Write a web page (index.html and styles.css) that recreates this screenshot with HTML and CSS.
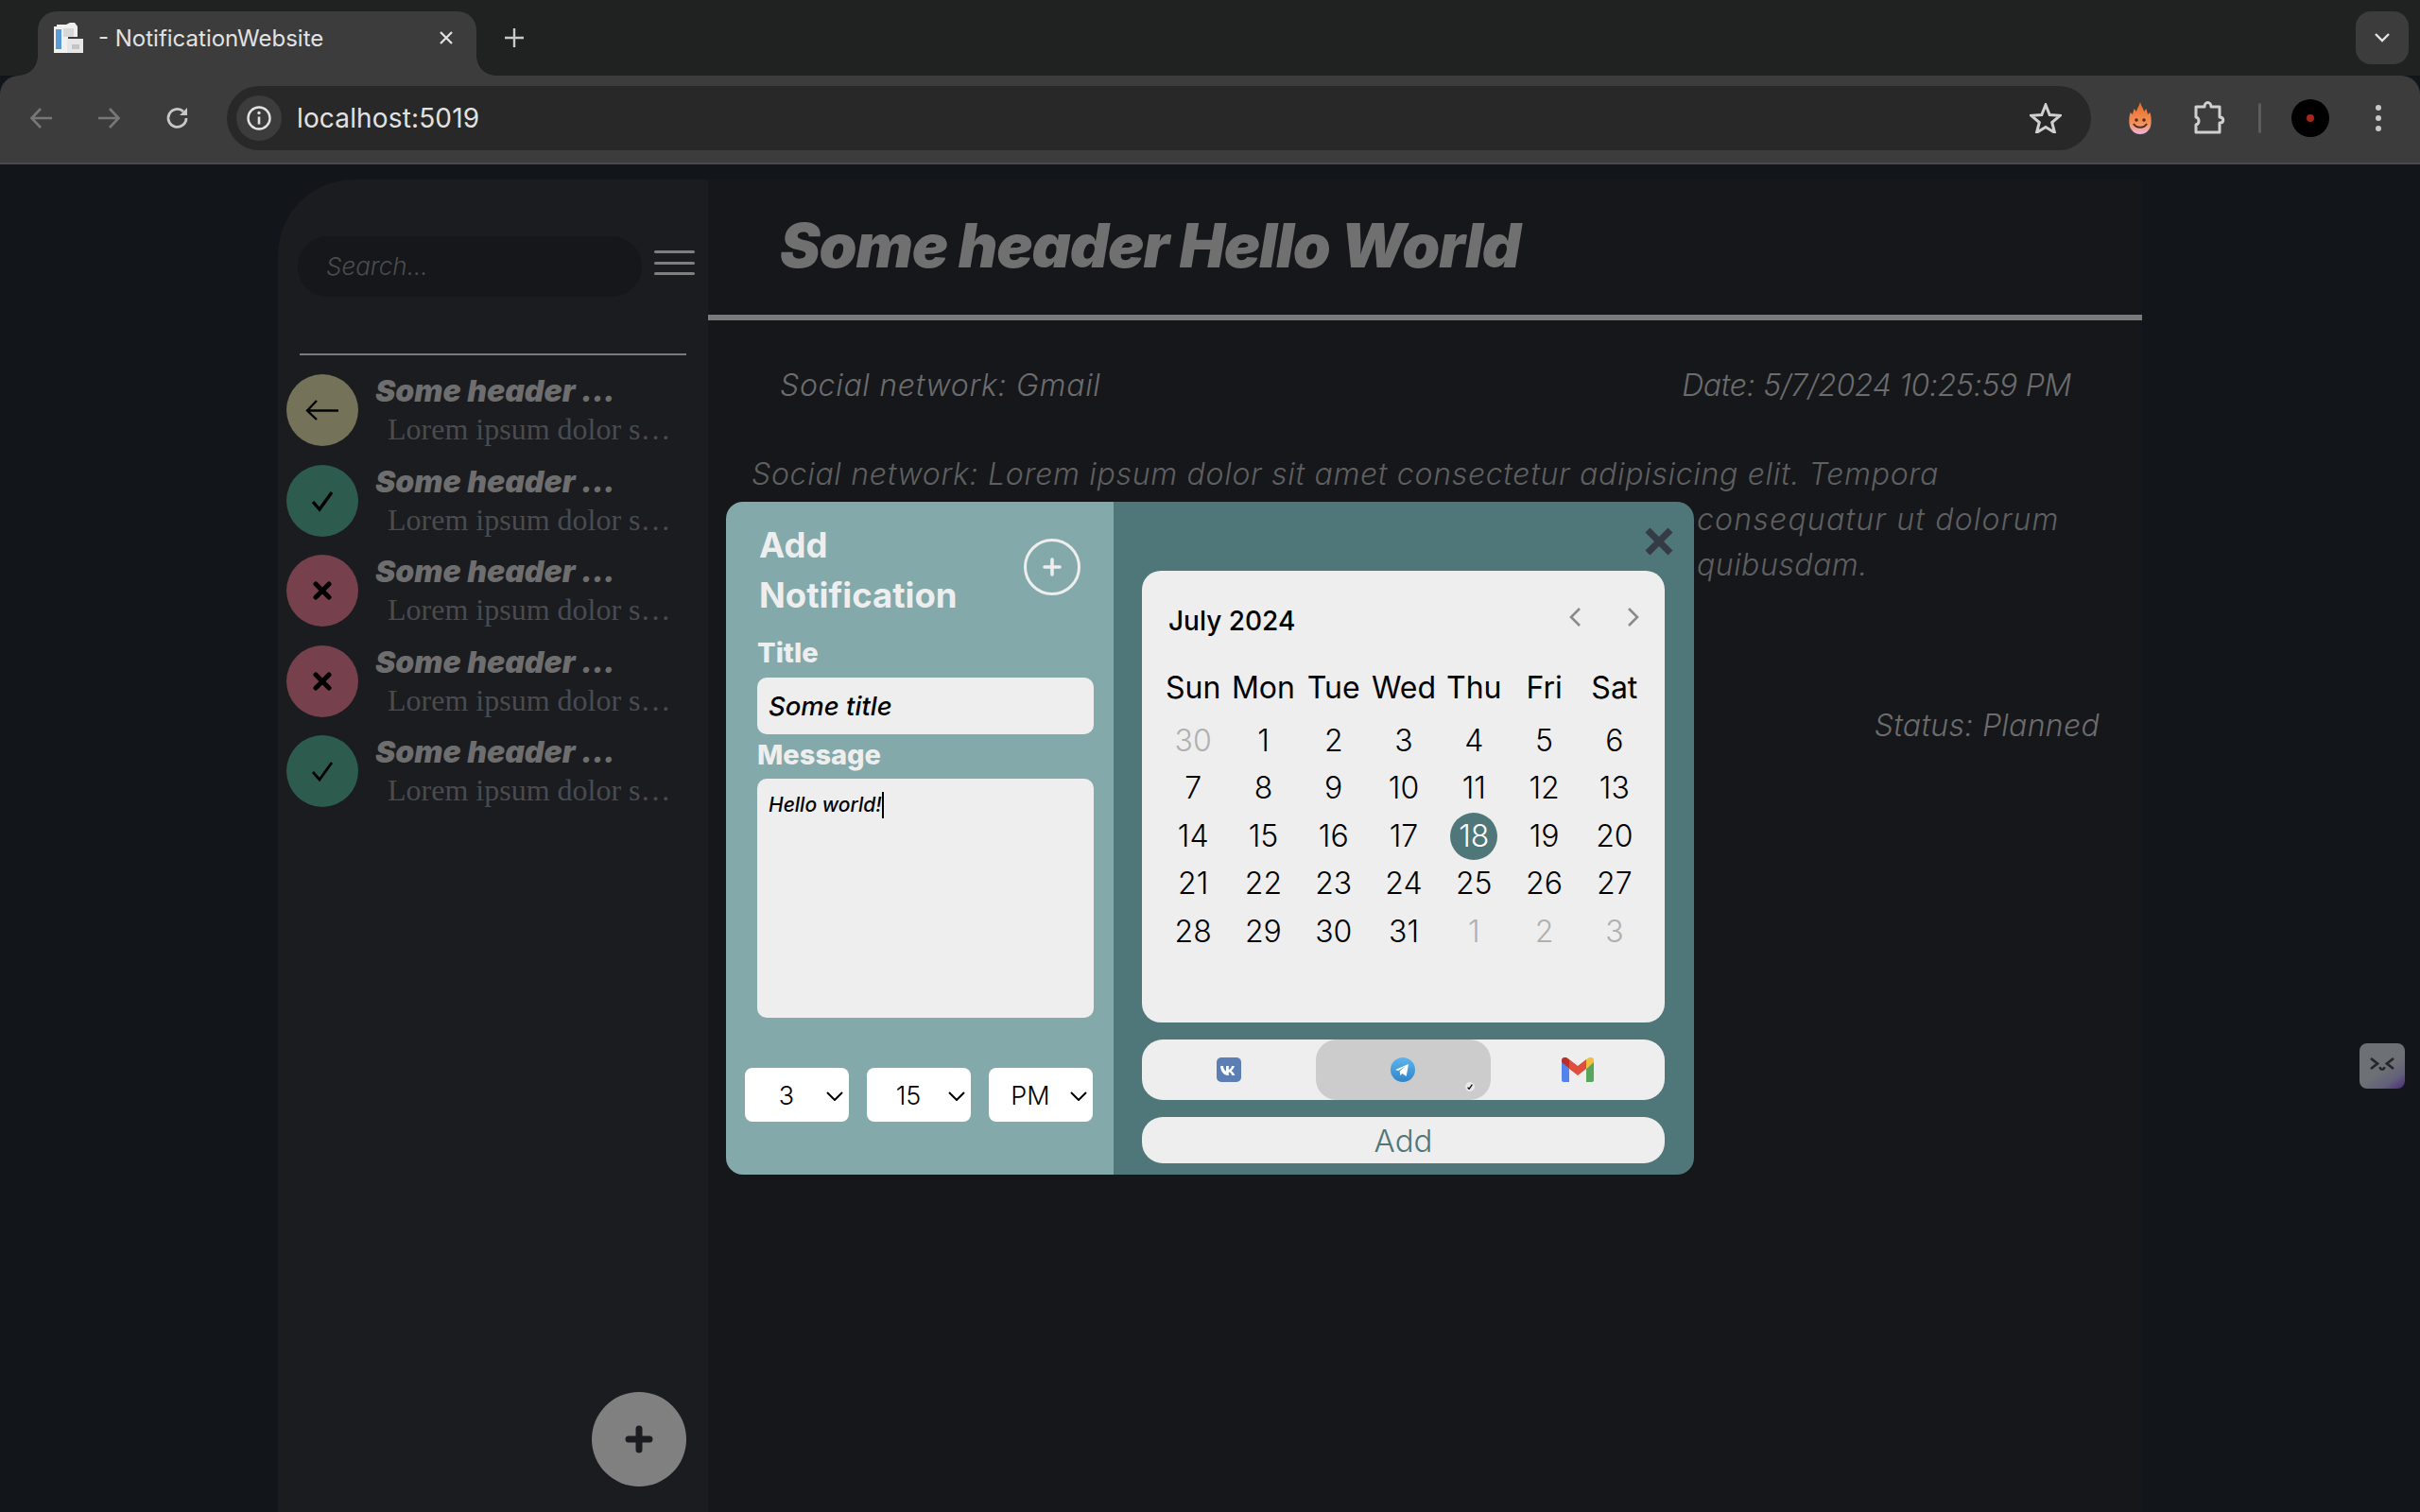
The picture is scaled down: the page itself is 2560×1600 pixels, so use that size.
FILE: index.html
```html
<!DOCTYPE html>
<html lang="en">
<head>
<meta charset="UTF-8" />
<title>- NotificationWebsite</title>
<link rel="stylesheet" href="styles.css">
</head>
<body>
  <!-- Browser chrome -->
  <header class="tabstrip">
    <div class="tab">
      <svg class="favicon" viewBox="0 0 32 32"><path d="M1 4h3V2h10l4-2h5l3 4v11H16v17H1z" fill="#f0f0f0"/><path d="M3 7h6v21H3z" fill="#5b9bd5"/><path d="M11 6h11v9H11z" fill="#d8d8d8"/><path d="M15 17h17v15H15z" fill="#e6e6e6"/><path d="M20 23h8v5h-8z" fill="#c4c4c4"/></svg>
      <span class="tab-title">- NotificationWebsite</span>
      <svg class="tab-close" viewBox="0 0 16 16"><path d="M2 2l12 12M14 2L2 14" stroke="#e3e3e3" stroke-width="2.2"/></svg>
    </div>
    <svg class="new-tab" viewBox="0 0 20 20"><path d="M10 0v20M0 10h20" stroke="#c8c8c8" stroke-width="2.4"/></svg>
    <div class="tab-search"><svg viewBox="0 0 16 10" width="16" height="10"><path d="M1 1l7 7 7-7" fill="none" stroke="#e3e3e3" stroke-width="2.4"/></svg></div>
  </header>
  <nav class="toolbar">
    <svg class="nav-icon" viewBox="0 0 26 26"><path d="M24 13H3M12 3L2.500 13 12 23" fill="none" stroke="#777" stroke-width="2.6"/></svg>
    <svg class="nav-icon" viewBox="0 0 26 26"><path d="M2 13h21M14 3l9.500 10L14 23" fill="none" stroke="#777" stroke-width="2.6"/></svg>
    <svg class="nav-icon reload" viewBox="0 0 26 26"><path d="M22 13a9.500 9.500 0 1 1-3-7" fill="none" stroke="#c8c8c8" stroke-width="2.8"/><path d="M23 2v8h-8z" fill="#c8c8c8"/></svg>
    <div class="omnibox">
      <div class="site-info"><svg viewBox="0 0 26 26" width="26" height="26"><circle cx="13" cy="13" r="11.500" fill="none" stroke="#e3e3e3" stroke-width="2.4"/><path d="M13 11.500v8" stroke="#e3e3e3" stroke-width="2.6"/><circle cx="13" cy="7.500" r="1.700" fill="#e3e3e3"/></svg></div>
      <span class="url">localhost:5019</span>
      <svg class="star" viewBox="0 0 34 32"><path d="M17 2l4.200 10.500 11 .8-8.500 7.200 2.800 10.800L17 25.400 7.500 31.300l2.800-10.800L1.800 13.300l11-.8z" fill="none" stroke="#d0d0d0" stroke-width="3"/></svg>
    </div>
    <svg class="flame" viewBox="0 0 26 34"><defs><linearGradient id="fl" x1="0" y1="0" x2="0" y2="1"><stop offset="0" stop-color="#ee6a1e"/><stop offset=".65" stop-color="#f0905a"/><stop offset="1" stop-color="#efb6e0"/></linearGradient></defs><path d="M13 0c1 4 3 6 4 10l2.500-3c.5 2 1 4 1.500 6l2.500-2c1.500 5 1.500 11 .5 15-2 5-6 8-11 8S4 31 2 26C1 22 1 16 2.500 11L5 13c.5-2 1-4 1.500-6L9 10c1-4 3-6 4-10z" fill="url(#fl)"/><circle cx="9" cy="19" r="1.800" fill="#5a2a1a"/><circle cx="17" cy="19" r="1.800" fill="#5a2a1a"/><path d="M6 23c3 5 11 5 14 0" fill="none" stroke="#5a2a1a" stroke-width="2"/></svg>
    <svg class="puzzle" viewBox="0 0 34 36"><path d="M3 6h9c0-6 7-6 7 0h9v11c5 0 5 6 0 6v10H3V25c4-1 4-7 0-8z" fill="none" stroke="#d0d0d0" stroke-width="3" stroke-linejoin="round"/></svg>
    <span class="tool-sep"></span>
    <div class="avatar"><span class="avatar-dot"></span></div>
    <div class="kebab"><span></span><span></span><span></span></div>
  </nav>

  <!-- Page -->
  <div class="page">
    <aside class="sidebar">
      <div class="search-row">
        <div class="search">Search...</div>
        <div class="burger"><span></span><span></span><span></span></div>
      </div>
      <div class="divider"></div>
      <ul class="note-list">
        <li class="note">
          <div class="status tan"><svg viewBox="0 0 36 24" width="36" height="24"><path d="M35 12.500H3M12 2L2 12.500 12 22" fill="none" stroke="#000" stroke-width="2.400"/></svg></div>
          <div class="note-text"><div class="note-head">Some header ...</div><div class="note-sub">Lorem ipsum dolor s…</div></div>
        </li>
        <li class="note">
          <div class="status green"><svg viewBox="0 0 24 24" width="24" height="24"><path d="M2 13l7 8L22 3" fill="none" stroke="#000" stroke-width="3.400"/></svg></div>
          <div class="note-text"><div class="note-head">Some header ...</div><div class="note-sub">Lorem ipsum dolor s…</div></div>
        </li>
        <li class="note">
          <div class="status red"><svg viewBox="0 0 20 20" width="20" height="20"><path d="M3 3l14 14M17 3L3 17" stroke="#000" stroke-width="5" stroke-linecap="round"/></svg></div>
          <div class="note-text"><div class="note-head">Some header ...</div><div class="note-sub">Lorem ipsum dolor s…</div></div>
        </li>
        <li class="note">
          <div class="status red"><svg viewBox="0 0 20 20" width="20" height="20"><path d="M3 3l14 14M17 3L3 17" stroke="#000" stroke-width="5" stroke-linecap="round"/></svg></div>
          <div class="note-text"><div class="note-head">Some header ...</div><div class="note-sub">Lorem ipsum dolor s…</div></div>
        </li>
        <li class="note">
          <div class="status green"><svg viewBox="0 0 24 24" width="24" height="24"><path d="M2 13l7 8L22 3" fill="none" stroke="#000" stroke-width="2.800"/></svg></div>
          <div class="note-text"><div class="note-head">Some header ...</div><div class="note-sub">Lorem ipsum dolor s…</div></div>
        </li>
      </ul>
      <div class="fab"><svg viewBox="0 0 30 30" width="30" height="30"><path d="M15 4v22M4 15h22" stroke="#1a1c20" stroke-width="7" stroke-linecap="round"/></svg></div>
    </aside>

    <main class="detail">
      <h1 class="detail-title">Some header Hello World</h1>
      <div class="detail-meta">
        <span class="meta-network">Social network: Gmail</span>
        <span class="meta-date">Date: 5/7/2024 10:25:59 PM</span>
      </div>
      <div class="detail-body">
        <div class="body-line">Social network: Lorem ipsum dolor sit amet consectetur adipisicing elit. Tempora</div>
        <div class="body-line behind wide">consequatur ut dolorum</div>
        <div class="body-line behind">quibusdam.</div>
      </div>
      <div class="detail-status">Status: Planned</div>
    </main>

    <!-- Add notification dialog -->
    <section class="dialog">
      <div class="dialog-left">
        <div class="dialog-head">
          <h2 class="dialog-title">Add<br>Notification</h2>
          <div class="add-circle"><svg viewBox="0 0 20 20" width="20" height="20"><path d="M10 2v16M2 10h16" stroke="#eee" stroke-width="3.600" stroke-linecap="round"/></svg></div>
        </div>
        <div class="field-label">Title</div>
        <div class="field-input">Some title</div>
        <div class="field-label msg">Message</div>
        <div class="field-area">Hello world!<span class="caret"></span></div>
        <div class="time-row">
          <div class="time-select"><span>3</span><svg viewBox="0 0 18 10" width="18" height="10"><path d="M1 1l8 8 8-8" fill="none" stroke="#000" stroke-width="2"/></svg></div>
          <div class="time-select"><span>15</span><svg viewBox="0 0 18 10" width="18" height="10"><path d="M1 1l8 8 8-8" fill="none" stroke="#000" stroke-width="2"/></svg></div>
          <div class="time-select"><span>PM</span><svg viewBox="0 0 18 10" width="18" height="10"><path d="M1 1l8 8 8-8" fill="none" stroke="#000" stroke-width="2"/></svg></div>
        </div>
      </div>
      <div class="dialog-right">
        <div class="close-row"><svg viewBox="0 0 30 30" width="30" height="30"><path d="M3 3l24 24M27 3L3 27" stroke="#353b45" stroke-width="7"/></svg></div>
        <div class="calendar">
          <div class="cal-head">
            <span class="cal-month">July 2024</span>
            <svg class="cal-nav" viewBox="0 0 14 22" width="14" height="22"><path d="M12 2L3 11l9 9" fill="none" stroke="#8a8a8a" stroke-width="2.600"/></svg>
            <svg class="cal-nav" viewBox="0 0 14 22" width="14" height="22"><path d="M2 2l9 9-9 9" fill="none" stroke="#8a8a8a" stroke-width="2.600"/></svg>
          </div>
          <div class="cal-grid">
            <span class="wd">Sun</span><span class="wd">Mon</span><span class="wd">Tue</span><span class="wd">Wed</span><span class="wd">Thu</span><span class="wd">Fri</span><span class="wd">Sat</span>
            <span class="day off">30</span><span class="day">1</span><span class="day">2</span><span class="day">3</span><span class="day">4</span><span class="day">5</span><span class="day">6</span>
            <span class="day">7</span><span class="day">8</span><span class="day">9</span><span class="day">10</span><span class="day">11</span><span class="day">12</span><span class="day">13</span>
            <span class="day">14</span><span class="day">15</span><span class="day">16</span><span class="day">17</span><span class="day picked"><b>18</b></span><span class="day">19</span><span class="day">20</span>
            <span class="day">21</span><span class="day">22</span><span class="day">23</span><span class="day">24</span><span class="day">25</span><span class="day">26</span><span class="day">27</span>
            <span class="day">28</span><span class="day">29</span><span class="day">30</span><span class="day">31</span><span class="day off">1</span><span class="day off">2</span><span class="day off">3</span>
          </div>
        </div>
        <div class="network-tabs">
          <div class="net">
            <svg viewBox="0 0 26 26" width="26" height="26"><rect width="26" height="26" rx="5" fill="#5b7fb5"/><path d="M4 9h3c.3 3 1.600 5 3 5.500V9h2.800v4c1.300-.3 2.700-2 3.300-4h2.800c-.6 2.600-2.200 4.300-3.400 5.200 1.300.7 3 2.200 3.800 4.800h-3c-.6-2-2-3.300-3.500-3.500V19h-.6C7.800 19 4.400 15.300 4 9z" fill="#fff"/></svg>
          </div>
          <div class="net selected">
            <svg viewBox="0 0 26 26" width="26" height="26"><defs><linearGradient id="tg" x1="0" y1="0" x2="0" y2="1"><stop offset="0" stop-color="#5fb4ee"/><stop offset="1" stop-color="#2f85c8"/></linearGradient></defs><circle cx="13" cy="13" r="13" fill="url(#tg)"/><path d="M5 13l14-6-2.300 13-4.200-3-2.200 2-.6-4.500 6.300-5.500-7.800 5z" fill="#fff"/></svg>
            <span class="net-check"><svg viewBox="0 0 10 10" width="6" height="6"><path d="M1 6l2.500 3L9 1" fill="none" stroke="#000" stroke-width="2"/></svg></span>
          </div>
          <div class="net">
            <svg viewBox="0 0 34 26" width="34" height="26"><path d="M0 4v20c0 1 1 2 2 2h6V12z" fill="#5383ec"/><path d="M26 12v14h6c1 0 2-1 2-2V4z" fill="#58a65c"/><path d="M26 2v10l8-7V3c0-2-2-4-5-3z" fill="#f1bf42"/><path d="M8 12V2l9 7 9-7v10l-9 7z" fill="#e04e3e"/><path d="M0 3v2l8 7V2L5 0C3-.6 0 0 0 3z" fill="#b9302a"/></svg>
          </div>
        </div>
        <div class="add-btn">Add</div>
      </div>
    </section>

    <div class="devtools-bubble"><svg viewBox="0 0 30 20" width="30" height="20"><path d="M3 4l7 5.500-7 5.500M27 4l-7 5.500 7 5.500" fill="none" stroke="#24272c" stroke-width="2.800"/><path d="M12.500 13c.5 3.500 4.500 3.500 5 0" fill="none" stroke="#24272c" stroke-width="2.400"/></svg></div>
  </div>
</body>
</html>
```

FILE: styles.css
```css
/* Reset and base styles */
* {
  box-sizing: border-box;
}
html, body {
  margin: 0;
  padding: 0;
  width: 2560px;
  height: 1600px;
  overflow: hidden;
  background: #12151a;
  font-family: Inter, 'Liberation Sans', sans-serif;
}
h1, h2, ul {
  margin: 0;
  padding: 0;
}

/* Browser chrome */
.tabstrip {
  display: flex;
  align-items: flex-start;
  height: 80px;
  padding: 12px 12px 0 40px;
  background: #202222;
}
.tab {
  position: relative;
  display: flex;
  align-items: center;
  width: 464px;
  height: 68px;
  padding: 0 24px 12px 16px;
  background: #3c3c3c;
  border-radius: 20px 20px 0 0;
}
.tab::before, .tab::after {
  content: '';
  position: absolute;
  bottom: 0;
  width: 20px;
  height: 20px;
}
.tab::before {
  left: -20px;
  background: radial-gradient(circle at 0 0, #202222 19.500px, #3c3c3c 20px);
}
.tab::after {
  right: -20px;
  background: radial-gradient(circle at 100% 0, #202222 19.500px, #3c3c3c 20px);
}
.favicon {
  width: 32px;
  height: 32px;
}
.tab-title {
  flex: 1;
  margin-left: 16px;
  font-size: 24px;
  color: #e2e2e2;
}
.tab-close {
  width: 16px;
  height: 16px;
}
.new-tab {
  width: 20px;
  height: 20px;
  margin: 18px 0 0 30px;
}
.tab-search {
  display: flex;
  align-items: center;
  justify-content: center;
  width: 56px;
  height: 56px;
  margin-left: auto;
  background: #3c3c3c;
  border-radius: 16px;
}
.toolbar {
  display: flex;
  align-items: center;
  height: 94px;
  padding: 0 0 2px 31px;
  background: #3c3c3c;
  border-bottom: 2px solid #4a4a4a;
  border-radius: 20px 20px 0 0;
}
.nav-icon {
  width: 26px;
  height: 26px;
  margin-right: 45px;
}
.reload {
  margin-left: 2px;
}
.omnibox {
  display: flex;
  align-items: center;
  width: 1972px;
  height: 68px;
  margin-left: -6px;
  padding: 0 31px 0 10px;
  background: #282828;
  border-radius: 34px;
}
.site-info {
  display: flex;
  align-items: center;
  justify-content: center;
  width: 48px;
  height: 48px;
  background: #3c3c3c;
  border-radius: 50%;
}
.url {
  flex: 1;
  margin-left: 16px;
  font-size: 28px;
  color: #e2e2e2;
  letter-spacing: 0.15px;
}
.star {
  width: 34px;
  height: 32px;
}
.flame {
  width: 26px;
  height: 34px;
  margin-left: 39px;
}
.puzzle {
  width: 34px;
  height: 36px;
  margin-left: 43px;
}
.tool-sep {
  width: 3px;
  height: 32px;
  margin-left: 35px;
  background: #5c5c5c;
  border-radius: 2px;
}
.avatar {
  display: flex;
  align-items: center;
  justify-content: center;
  width: 40px;
  height: 40px;
  margin-left: 32px;
  background: #000;
  border-radius: 50%;
}
.avatar-dot {
  width: 8px;
  height: 8px;
  background: #a8251a;
  border-radius: 50%;
}
.kebab {
  display: flex;
  flex-direction: column;
  gap: 5px;
  margin-left: 49px;
}
.kebab span {
  width: 6px;
  height: 6px;
  background: #c8c8c8;
  border-radius: 50%;
}

/* Page */
.page {
  position: relative;
  display: flex;
  height: 1426px;
  padding: 16px 0 0 294px;
}

/* Sidebar */
.sidebar {
  display: flex;
  flex-direction: column;
  width: 455px;
  padding-top: 60px;
  background: #1a1c20;
  border-radius: 80px 0 0 0;
}
.search-row {
  display: flex;
  align-items: flex-start;
  padding-left: 21px;
}
.search {
  width: 364px;
  height: 64px;
  padding-left: 30px;
  font-size: 26px;
  font-weight: 300;
  font-style: italic;
  line-height: 64px;
  color: #4b4c4f;
  background: #16171b;
  border-radius: 32px;
}
.burger {
  display: flex;
  flex-direction: column;
  gap: 8.500px;
  width: 43px;
  margin: 15px 0 0 13px;
}
.burger span {
  height: 3px;
  background: #7f7f7f;
  border-radius: 2px;
}
.divider {
  width: 409px;
  height: 2px;
  margin: 60px 0 20px 23px;
  background: #7b7b7b;
}
.note-list {
  display: flex;
  flex-direction: column;
  gap: 19.600px;
  padding-left: 9px;
  list-style: none;
}
.note {
  display: flex;
  gap: 18px;
  height: 76px;
}
.status {
  display: flex;
  align-items: center;
  justify-content: center;
  width: 76px;
  height: 76px;
  border-radius: 50%;
}
.tan { background: #75725a; }
.green { background: #2d5c4e; }
.red { background: #77404d; }
.note-head {
  font-size: 32px;
  font-weight: 900;
  font-style: italic;
  line-height: 36px;
  color: #6e6e6e;
}
.note-sub {
  padding-left: 13px;
  font-family: 'Liberation Serif', serif;
  font-size: 32px;
  line-height: 45px;
  color: #4a4b4e;
}
.fab {
  display: flex;
  align-items: center;
  justify-content: center;
  align-self: flex-end;
  width: 100px;
  height: 100px;
  margin: auto 23px 27px 0;
  background: #808080;
  border-radius: 50%;
}

/* Notification details */
.detail {
  width: 1517px;
  background: #15171b;
}
.detail-title {
  height: 149px;
  padding: 30px 0 0 76px;
  font-size: 64px;
  font-weight: 900;
  font-style: italic;
  line-height: 80px;
  color: #707070;
  border-bottom: 6px solid #7a7a7a;
  letter-spacing: -1.100px;
}
.detail-meta {
  display: flex;
  justify-content: space-between;
  margin-top: 45px;
  padding: 0 75px 0 76px;
  font-size: 32px;
  font-weight: 300;
  font-style: italic;
  line-height: 48px;
  color: #6c6c6c;
}
.meta-network {
  letter-spacing: 0.7px;
}
.meta-date {
  letter-spacing: -0.3px;
}
.detail-body {
  margin-top: 46px;
  padding-left: 46px;
  font-size: 32px;
  font-weight: 300;
  font-style: italic;
  line-height: 48px;
  color: #5f5f5f;
  letter-spacing: 0.7px;
}
.behind {
  padding-left: 1000px;
  letter-spacing: 0.5px;
}
.behind.wide {
  letter-spacing: 1.2px;
}
.detail-status {
  margin-top: 122px;
  padding-right: 45px;
  text-align: right;
  font-size: 32px;
  font-weight: 300;
  font-style: italic;
  line-height: 48px;
  color: #6c6c6c;
  letter-spacing: 0.3px;
}

/* Dialog */
.dialog {
  position: absolute;
  left: 768px;
  top: 357px;
  display: flex;
  width: 1024px;
  height: 712px;
  overflow: hidden;
  border-radius: 18px;
}
.dialog-left {
  width: 410px;
  padding: 0 21px 0 20px;
  background: #84a9ab;
  color: #eee;
}
.dialog-head {
  display: flex;
  justify-content: space-between;
  padding: 20px 0 0 15px;
}
.dialog-title {
  font-size: 36.500px;
  font-weight: 700;
  line-height: 53px;
}
.add-circle {
  display: flex;
  align-items: center;
  justify-content: center;
  width: 60px;
  height: 60px;
  margin: 19px 14px 0 0;
  border: 3px solid #eee;
  border-radius: 50%;
}
.field-label {
  margin: 16px 0 0 13px;
  font-size: 29px;
  font-weight: 800;
  line-height: 36px;
}
.field-label.msg {
  margin-top: 4px;
}
.field-input {
  height: 60px;
  margin: 8px 0 0 13px;
  padding-left: 12px;
  font-size: 27.500px;
  font-weight: 500;
  font-style: italic;
  line-height: 60px;
  color: #000;
  background: #eee;
  border-radius: 10px;
}
.field-area {
  height: 253px;
  margin: 7px 0 0 13px;
  padding: 14px 12px;
  font-size: 21px;
  font-weight: 500;
  font-style: italic;
  line-height: 28px;
  color: #000;
  background: #eee;
  border-radius: 10px;
}
.caret {
  display: inline-block;
  width: 2px;
  height: 28px;
  vertical-align: top;
  background: #000;
}
.time-row {
  display: flex;
  gap: 19px;
  margin-top: 53px;
}
.time-select {
  display: flex;
  align-items: center;
  justify-content: space-between;
  width: 110px;
  height: 57px;
  padding: 2px 6px 0 0;
  font-size: 27px;
  font-weight: 300;
  color: #000;
  background: #fff;
  border-radius: 8px;
}
.time-select span {
  flex: 1;
  padding-left: 2px;
  text-align: center;
}
.dialog-right {
  width: 614px;
  padding: 0 31px 0 30px;
  background: #4f7678;
}
.close-row {
  display: flex;
  justify-content: flex-end;
  height: 73px;
  padding: 27px 0 0 0;
  margin-right: -9px;
}
.calendar {
  width: 553px;
  height: 478px;
  padding: 32px 16px 0 17px;
  color: #000;
  background: #eee;
  border-radius: 20px;
}
.cal-head {
  display: flex;
  align-items: flex-start;
  padding-left: 11px;
  height: 70px;
}
.cal-month {
  flex: 1;
  font-size: 28px;
  font-weight: 500;
  line-height: 42px;
}
.cal-nav {
  margin: 6px 10px 0 38px;
}
.cal-grid {
  display: grid;
  grid-template-columns: repeat(7, 1fr);
  grid-auto-rows: 50.600px;
  margin-top: 2px;
  text-align: center;
  font-size: 32px;
  font-weight: 300;
  line-height: 50px;
}
.wd {
  font-weight: 400;
  line-height: 40px;
  white-space: nowrap;
}
.off {
  color: #b0b0b0;
}
.picked b {
  display: inline-block;
  width: 50px;
  height: 50px;
  font-weight: 300;
  color: #fff;
  background: #4f7678;
  border-radius: 50%;
}
.network-tabs {
  display: flex;
  height: 64px;
  margin-top: 18px;
  background: #eee;
  border-radius: 22px;
}
.net {
  position: relative;
  display: flex;
  align-items: center;
  justify-content: center;
  flex: 1;
  border-radius: 22px;
}
.selected {
  background: #ccc;
}
.net-check {
  position: absolute;
  left: 158px;
  top: 45px;
  display: flex;
  align-items: center;
  justify-content: center;
  width: 10px;
  height: 10px;
  background: #e8e8e8;
  border-radius: 50%;
}
.add-btn {
  height: 49px;
  margin-top: 18px;
  text-align: center;
  font-size: 33px;
  font-weight: 300;
  line-height: 50px;
  color: #4f7678;
  background: #eee;
  border-radius: 22px;
}

/* Floating extension button */
.devtools-bubble {
  position: absolute;
  right: 16px;
  top: 930px;
  display: flex;
  align-items: center;
  justify-content: center;
  width: 48px;
  height: 48px;
  padding-bottom: 5px;
  background: linear-gradient(145deg, #6d7175 55%, #62607a 78%, #4b2a7c 100%);
  border-radius: 8px;
}
```
